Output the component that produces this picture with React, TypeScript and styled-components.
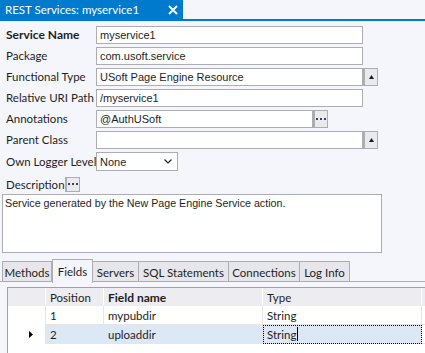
import { Fragment } from "react";
import styled, { createGlobalStyle } from "styled-components";

const Global = createGlobalStyle`
  html, body { margin: 0; padding: 0; background: #f5f6fc; }
  body {
    font-family: Lato, "Noto Sans", "Liberation Sans", sans-serif;
    font-size: 11.5px;
    color: #1e1e1e;
  }
`;

const Page = styled.div`
  width: 425px;
  height: 353px;
  overflow: hidden;
  background: #f5f6fc;
`;

const TitleBar = styled.div`
  display: flex;
  height: 19px;
  border-bottom: 2px solid #007acc;
`;

const TitleTab = styled.div`
  width: 183px;
  box-sizing: border-box;
  background: #007acc;
  color: #fff;
  display: flex;
  align-items: center;
  justify-content: space-between;
  padding: 0 5px 0 5px;
  font-size: 11.5px;
  line-height: 19px;
`;

const Form = styled.div`
  display: flex;
  flex-direction: column;
  gap: 3px;
  padding: 5px 0 0 6px;
`;

const Row = styled.div`
  display: grid;
  grid-template-columns: 90px auto;
  align-items: center;
  height: 18px;
`;

const Label = styled.span<{ $bold?: boolean }>`
  font-weight: ${(p) => (p.$bold ? 700 : 400)};
  font-size: ${(p) => (p.$bold ? 12 : 11.5)}px;
  white-space: nowrap;
  line-height: 18px;
`;

const Control = styled.div`
  display: flex;
`;

const Field = styled.div<{ $w: number }>`
  width: ${(p) => p.$w}px;
  height: 18px;
  box-sizing: border-box;
  border: 1px solid #abadb3;
  background: #fff;
  padding-left: 3px;
  font-family: "Liberation Sans", Arial, sans-serif;
  font-size: 11px;
  line-height: 16px;
  white-space: nowrap;
  overflow: hidden;
`;

const SideButton = styled.div<{ $h?: number }>`
  width: 15px;
  height: ${(p) => p.$h ?? 18}px;
  box-sizing: border-box;
  border: 1px solid #abadb3;
  border-left-width: 2px;
  background: #e9e9ee;
  display: flex;
  align-items: center;
  justify-content: center;
`;

const Select = styled.div`
  width: 82px;
  height: 19px;
  box-sizing: border-box;
  border: 1px solid #abadb3;
  background: #fff;
  display: flex;
  align-items: center;
  justify-content: space-between;
  padding: 0 5px 0 3px;
  font-family: "Liberation Sans", Arial, sans-serif;
  font-size: 11px;
`;

const DescRow = styled.div`
  display: flex;
  align-items: center;
  gap: 0;
  padding: 7px 0 2px 6px;
  height: 15px;
`;

const TextArea = styled.div`
  margin-left: 2px;
  width: 380px;
  height: 59px;
  box-sizing: border-box;
  border: 1px solid #abadb3;
  background: #fff;
  padding: 1px 2px;
  font-family: "Liberation Sans", Arial, sans-serif;
  font-size: 10.7px;
  line-height: 14px;
`;

const TabStrip = styled.div`
  display: flex;
  align-items: flex-end;
  height: 23px;
  margin-top: 6px;
  padding-left: 2px;
  position: relative;
  z-index: 1;
`;

const Tab = styled.div<{ $w: number; $active?: boolean }>`
  width: ${(p) => p.$w}px;
  height: ${(p) => (p.$active ? 24 : 21)}px;
  box-sizing: border-box;
  border: 1px solid #acacb3;
  border-left-width: ${(p) => (p.$active ? 1 : 0)}px;
  border-bottom: ${(p) => (p.$active ? "none" : "1px solid #acacb3")};
  margin-bottom: ${(p) => (p.$active ? -1 : 0)}px;
  background: ${(p) => (p.$active ? "#f5f6fc" : "#e6e6eb")};
  display: flex;
  align-items: center;
  justify-content: center;
  padding-top: ${(p) => (p.$active ? 0 : 1)}px;
  font-size: 11.5px;
  white-space: nowrap;
  &:first-child {
    border-left-width: 1px;
  }
`;

const Panel = styled.div`
  height: 71px;
  padding: 5px 0 0 7px;
  border-top: 1px solid #acacb3;
  margin-top: -1px;
`;

const Grid = styled.div`
  display: grid;
  grid-template-columns: 38px 58px 159px 159px 20px;
  border-top: 1px solid #a0a0a8;
  border-left: 1px solid #a0a0a8;
  background: #fff;
  height: 80px;
  align-content: start;
`;

const HeadCell = styled.div<{ $bold?: boolean }>`
  height: 18px;
  background: #ececf1;
  border-right: 1px solid #fff;
  padding-left: 4px;
  font-weight: ${(p) => (p.$bold ? 700 : 400)};
  font-size: ${(p) => (p.$bold ? 12 : 11.5)}px;
  line-height: 20px;
  white-space: nowrap;
`;

const Cell = styled.div<{ $sel?: boolean; $focus?: boolean }>`
  height: 19px;
  box-sizing: border-box;
  background: ${(p) => (p.$sel ? "#dde8f6" : "#fff")};
  border-right: 1px solid #e6e6e6;
  border-bottom: 1px solid #e6e6e6;
  outline: ${(p) => (p.$focus ? "1px dotted #000" : "none")};
  outline-offset: -1px;
  padding-left: 4px;
  font-size: 11.5px;
  white-space: nowrap;
  display: flex;
  align-items: center;
`;

const RowHead = styled.div`
  height: 19px;
  box-sizing: border-box;
  background: #fff;
  border-right: 1px solid #e6e6e6;
  display: flex;
  align-items: center;
  padding-left: 21px;
`;

const Caret = styled.span`
  display: inline-block;
  width: 1px;
  height: 14px;
  background: #000;
  margin-left: 1px;
`;

const Close = () => (
  <svg width="10" height="10" viewBox="0 0 10 10">
    <path d="M1 1L9 9M9 1L1 9" stroke="#fff" strokeWidth="1.8" />
  </svg>
);

const Up = () => (
  <svg width="5" height="4" viewBox="0 0 5 4">
    <path d="M2.5 0L5 4H0z" fill="#1a1a2a" />
  </svg>
);

const Dots = () => (
  <svg width="10" height="3" viewBox="0 0 10 3">
    <rect x="0" y="0" width="2" height="2" fill="#3a3f5a" />
    <rect x="4" y="0" width="2" height="2" fill="#3a3f5a" />
    <rect x="8" y="0" width="2" height="2" fill="#3a3f5a" />
  </svg>
);

const Chevron = () => (
  <svg width="8" height="5" viewBox="0 0 8 5">
    <path d="M0.5 0.5L4 4L7.5 0.5" stroke="#222" strokeWidth="1.2" fill="none" />
  </svg>
);

const RowArrow = () => (
  <svg width="4" height="7" viewBox="0 0 4 7">
    <path d="M0 0L4 3.5L0 7z" fill="#000" />
  </svg>
);

const tabs = [
  { name: "Methods", w: 50 },
  { name: "Fields", w: 41, active: true },
  { name: "Servers", w: 46 },
  { name: "SQL Statements", w: 90 },
  { name: "Connections", w: 71 },
  { name: "Log Info", w: 50 },
];

const fields = [
  { pos: "1", name: "mypubdir", type: "String" },
  { pos: "2", name: "uploaddir", type: "String", current: true },
];

export default function App() {
  return (
    <Page>
      <Global />
      <TitleBar>
        <TitleTab>
          <span>REST Services: myservice1</span>
          <Close />
        </TitleTab>
      </TitleBar>

      <Form>
        <Row>
          <Label $bold>Service Name</Label>
          <Control><Field $w={267}>myservice1</Field></Control>
        </Row>
        <Row>
          <Label>Package</Label>
          <Control><Field $w={267}>com.usoft.service</Field></Control>
        </Row>
        <Row>
          <Label>Functional Type</Label>
          <Control>
            <Field $w={267}>USoft Page Engine Resource</Field>
            <SideButton><Up /></SideButton>
          </Control>
        </Row>
        <Row>
          <Label>Relative URI Path</Label>
          <Control><Field $w={267}>/myservice1</Field></Control>
        </Row>
        <Row>
          <Label>Annotations</Label>
          <Control>
            <Field $w={217}>@AuthUSoft</Field>
            <SideButton><Dots /></SideButton>
          </Control>
        </Row>
        <Row>
          <Label>Parent Class</Label>
          <Control>
            <Field $w={267} />
            <SideButton><Up /></SideButton>
          </Control>
        </Row>
        <Row>
          <Label>Own Logger Level</Label>
          <Control>
            <Select>
              <span>None</span>
              <Chevron />
            </Select>
          </Control>
        </Row>
      </Form>

      <DescRow>
        <Label>Description</Label>
        <SideButton $h={15}><Dots /></SideButton>
      </DescRow>
      <TextArea>Service generated by the New Page Engine Service action.</TextArea>

      <TabStrip>
        {tabs.map((t) => (
          <Tab key={t.name} $w={t.w} $active={t.active}>{t.name}</Tab>
        ))}
      </TabStrip>

      <Panel>
        <Grid>
          <HeadCell />
          <HeadCell>Position</HeadCell>
          <HeadCell $bold>Field name</HeadCell>
          <HeadCell>Type</HeadCell>
          <HeadCell />
          {fields.map((f) => (
            <Fragment key={f.pos}>
              <RowHead>{f.current && <RowArrow />}</RowHead>
              <Cell $sel={f.current}>{f.pos}</Cell>
              <Cell $sel={f.current}>{f.name}</Cell>
              <Cell $sel={f.current} $focus={f.current}>
                {f.type}
                {f.current && <Caret />}
              </Cell>
              <Cell />
            </Fragment>
          ))}
        </Grid>
      </Panel>
    </Page>
  );
}
